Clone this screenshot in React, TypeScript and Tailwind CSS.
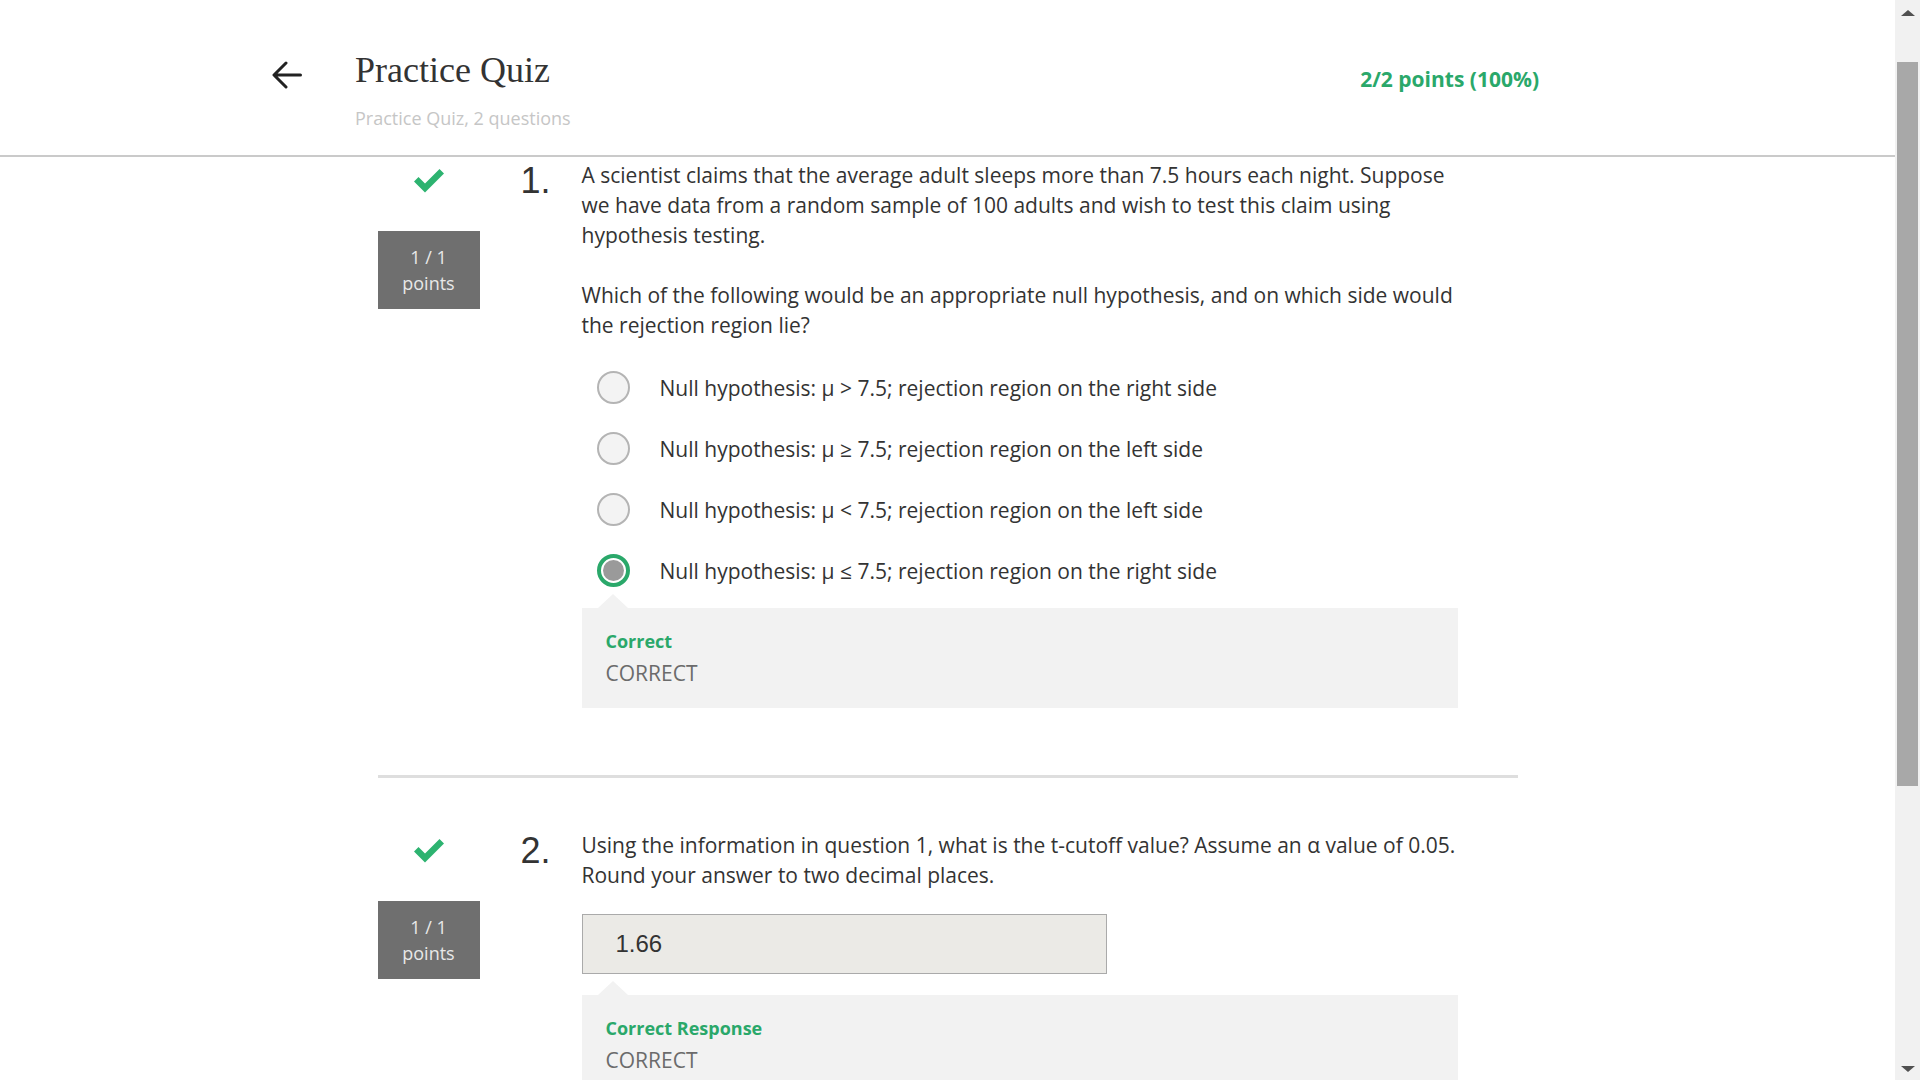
import React from 'react';

const GREEN = 'text-[#2aa86a]';

interface Option {
  label: string;
  selected?: boolean;
}

const CheckMark: React.FC = () => (
  <svg width="34" height="26" viewBox="0 0 34 26" className="block">
    <path d="M2 13.5 L6.5 9 L13 15.5 L27.5 1 L32 5.5 L13 24.5 Z" fill="#2db370" />
  </svg>
);

const PointsBox: React.FC = () => (
  <div className="w-[102px] h-[78px] bg-[#6f6f6f] text-[#e8e8e8] flex flex-col items-center justify-center text-[18px] leading-[26px] font-['Open_Sans',sans-serif]">
    <span>1 / 1</span>
    <span>points</span>
  </div>
);

const ScoreColumn: React.FC = () => (
  <div className="w-[102px] shrink-0 flex flex-col items-center">
    <div className="mt-[8px] h-[26px]">
      <CheckMark />
    </div>
    <div className="mt-[37px]">
      <PointsBox />
    </div>
  </div>
);

const Radio: React.FC<{ selected?: boolean }> = ({ selected }) =>
  selected ? (
    <div className="w-[33px] h-[33px] rounded-full border-4 border-[#2aa86a] bg-white p-[2px] shrink-0">
      <div className="w-full h-full rounded-full bg-[#9a9a9a]" />
    </div>
  ) : (
    <div className="w-[33px] h-[33px] rounded-full border-2 border-[#b4b4b4] bg-[#f3f3f3] shrink-0" />
  );

const Feedback: React.FC<{ title: string }> = ({ title }) => (
  <div className="relative bg-[#f2f2f2] pl-[24px] pt-[21px] pb-[20px]">
    <div className="absolute left-[16px] -top-[14px] w-0 h-0 border-l-[15px] border-r-[15px] border-b-[14px] border-l-transparent border-r-transparent border-b-[#f2f2f2]" />
    <div className={`text-[18px] leading-[24px] font-bold ${GREEN}`}>{title}</div>
    <div className="mt-[5px] text-[21px] leading-[30px] text-[#6b6b6b]">CORRECT</div>
  </div>
);

const QuestionNumber: React.FC<{ n: number }> = ({ n }) => (
  <div className="w-[61px] shrink-0 text-[36px] leading-[36px] mt-[3px] text-[#333] font-['Liberation_Sans',Arial,sans-serif]">
    {n}.
  </div>
);

const App: React.FC = () => {
  const options: Option[] = [
    { label: 'Null hypothesis: μ > 7.5; rejection region on the right side' },
    { label: 'Null hypothesis: μ ≥ 7.5; rejection region on the left side' },
    { label: 'Null hypothesis: μ < 7.5; rejection region on the left side' },
    { label: 'Null hypothesis: μ ≤ 7.5; rejection region on the right side', selected: true },
  ];

  return (
    <div className="w-[1920px] h-[1080px] overflow-hidden flex bg-white font-['Open_Sans',sans-serif] text-[#333]">
      <div className="flex-1 flex flex-col min-w-0">
        {/* header */}
        <header className="h-[157px] shrink-0 border-b-2 border-[#cacaca] flex items-start justify-between pl-[272px] pr-[356px] pt-[50px]">
          <div className="flex items-start">
            <svg width="30" height="28" viewBox="0 0 30 28" className="mt-[11px] shrink-0">
              <path d="M28.5 14 H2.5 M14 2 L2 14 L14 26" fill="none" stroke="#222" strokeWidth="3" strokeLinecap="round" strokeLinejoin="round" />
            </svg>
            <div className="ml-[53px]">
              <h1 className="text-[36px] leading-[40px] text-[#333] font-['Liberation_Serif',serif]">Practice Quiz</h1>
              <p className="mt-[16px] text-[18px] leading-[24px] text-[#c6c6c6]">Practice Quiz, 2 questions</p>
            </div>
          </div>
          <div className={`mt-[15px] text-[21px] leading-[28px] font-bold ${GREEN}`}>2/2 points (100%)</div>
        </header>

        <main className="w-[1140px] mx-auto">
          {/* question 1 */}
          <section className="flex pt-[3px]">
            <ScoreColumn />
            <div className="ml-[41px] flex">
              <QuestionNumber n={1} />
              <div className="w-[876px] text-[21px] leading-[30px]">
                <p>
                  A scientist claims that the average adult sleeps more than 7.5 hours each night. Suppose we have data from a
                  random sample of 100 adults and wish to test this claim using hypothesis testing.
                </p>
                <p className="mt-[30px]">
                  Which of the following would be an appropriate null hypothesis, and on which side would the rejection region lie?
                </p>
                <div className="mt-[17px] flex flex-col">
                  {options.map((opt, i) => (
                    <div key={i} className="h-[61px] flex items-center pl-[15px]">
                      <Radio selected={opt.selected} />
                      <span className="ml-[30px]">{opt.label}</span>
                    </div>
                  ))}
                </div>
                <div className="mt-[7px]">
                  <Feedback title="Correct" />
                </div>
              </div>
            </div>
          </section>

          <div className="mt-[67px] h-[3px] bg-[#dedede]" />

          {/* question 2 */}
          <section className="flex mt-[52px]">
            <ScoreColumn />
            <div className="ml-[41px] flex">
              <QuestionNumber n={2} />
              <div className="w-[876px] text-[21px] leading-[30px]">
                <p>
                  Using the information in question 1, what is the t-cutoff value? Assume an α value of 0.05. Round your answer
                  to two decimal places.
                </p>
                <div className="mt-[24px] w-[525px] h-[60px] border border-[#aaa] bg-[#ebeae6] flex items-center pl-[33px] text-[24px] text-[#333] font-['Liberation_Sans',Arial,sans-serif]">
                  1.66
                </div>
                <div className="mt-[21px]">
                  <Feedback title="Correct Response" />
                </div>
              </div>
            </div>
          </section>
        </main>
      </div>

      {/* scrollbar */}
      <div className="w-[25px] shrink-0 bg-[#f1f1f1] flex flex-col items-center">
        <div className="h-[62px] pt-[10px]">
          <div className="w-0 h-0 border-l-[7px] border-r-[7px] border-b-[6px] border-l-transparent border-r-transparent border-b-[#505050]" />
        </div>
        <div className="w-[21px] h-[724px] bg-[#a8a8a8]" />
        <div className="flex-1" />
        <div className="pb-[8px]">
          <div className="w-0 h-0 border-l-[7px] border-r-[7px] border-t-[6px] border-l-transparent border-r-transparent border-t-[#505050]" />
        </div>
      </div>
    </div>
  );
};

export default App;
